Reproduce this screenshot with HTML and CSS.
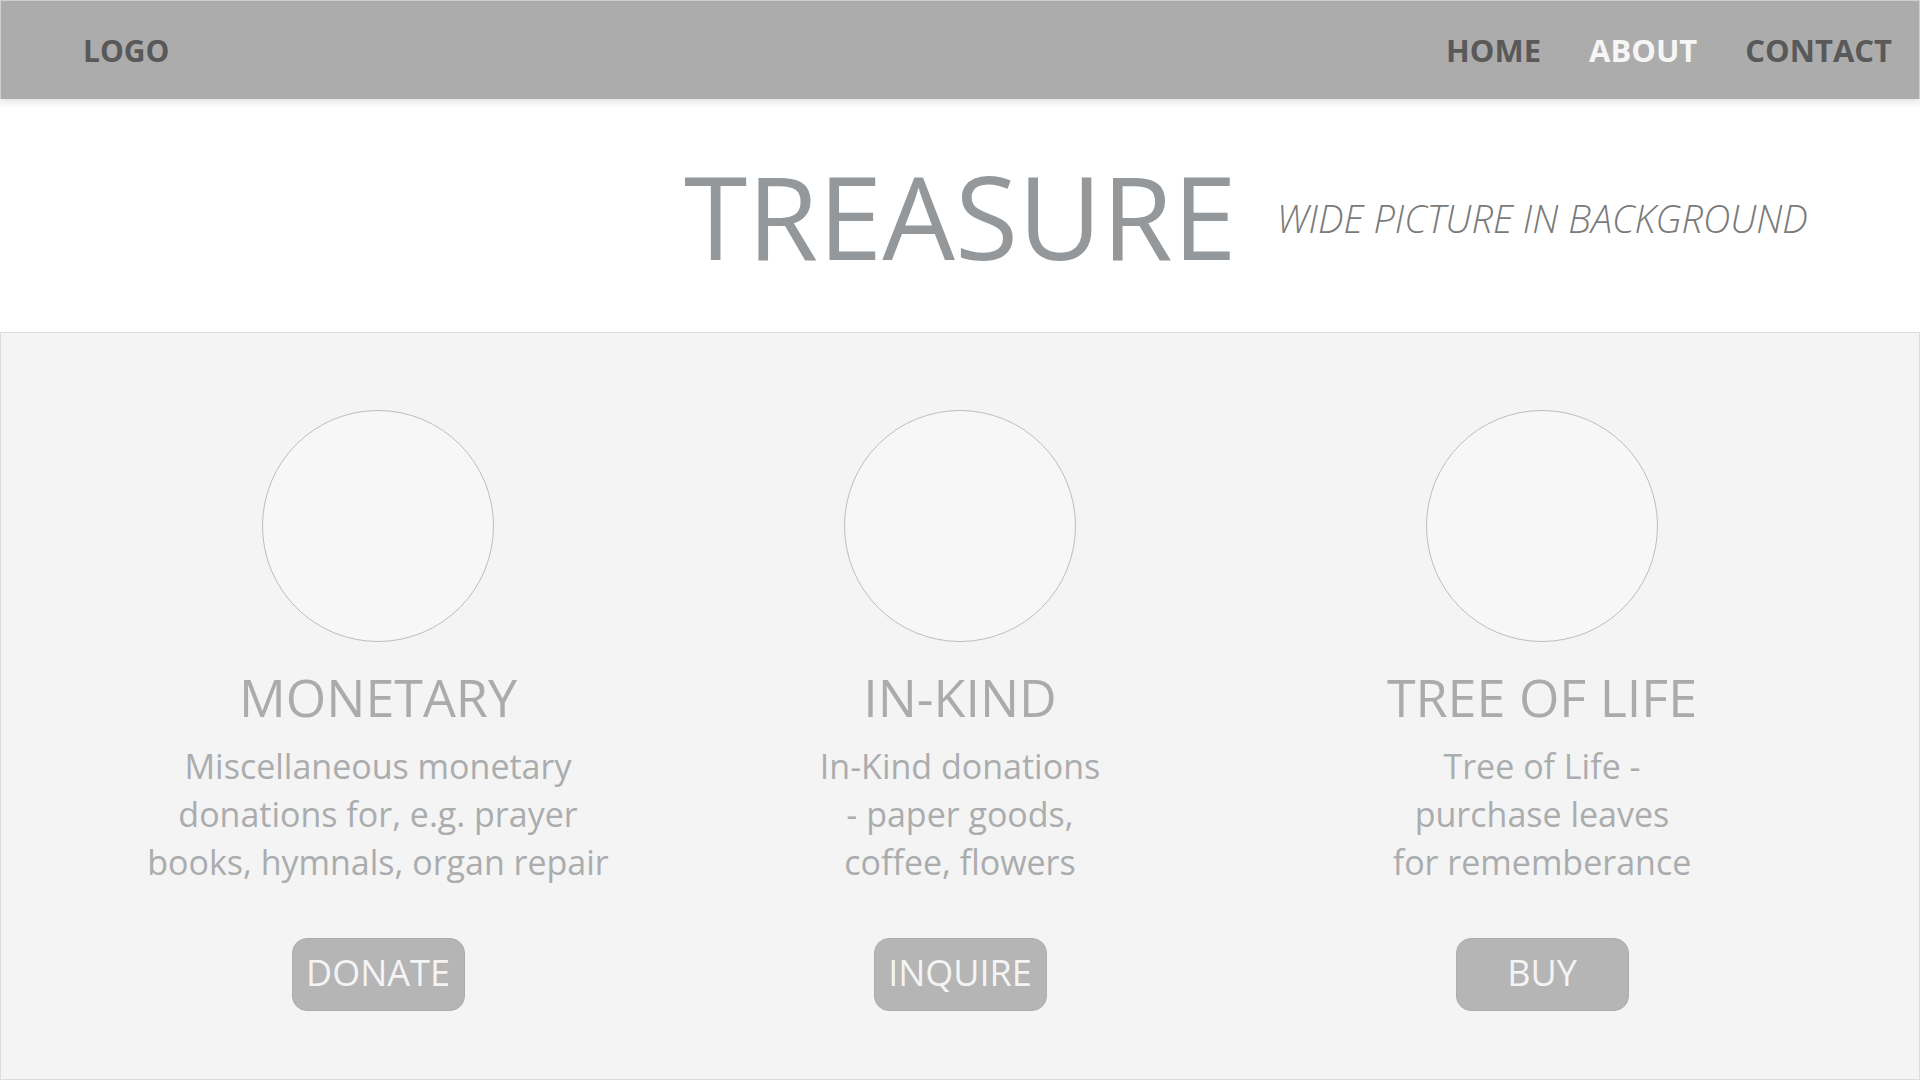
FILE: index.html
```html
<!DOCTYPE html>
<html>
<head>
<meta charset="utf-8">
<link rel="stylesheet" href="styles.css">
</head>
<body>
<header class="topbar">
  <div class="logo">LOGO</div>
  <nav class="nav">
    <a class="nav-link">HOME</a>
    <a class="nav-link active">ABOUT</a>
    <a class="nav-link">CONTACT</a>
  </nav>
</header>
<section class="hero">
  <h1 class="hero-title">TREASURE</h1>
  <div class="hero-sub">WIDE PICTURE IN BACKGROUND</div>
</section>
<section class="options">
  <div class="option">
    <div class="circle"></div>
    <h2 class="option-title">MONETARY</h2>
    <p class="option-text">Miscellaneous monetary<br>donations for, e.g. prayer<br>books, hymnals, organ repair</p>
    <a class="btn">DONATE</a>
  </div>
  <div class="option">
    <div class="circle"></div>
    <h2 class="option-title">IN-KIND</h2>
    <p class="option-text">In-Kind donations<br>- paper goods,<br>coffee, flowers</p>
    <a class="btn">INQUIRE</a>
  </div>
  <div class="option">
    <div class="circle"></div>
    <h2 class="option-title">TREE OF LIFE</h2>
    <p class="option-text">Tree of Life -<br>purchase leaves<br>for rememberance</p>
    <a class="btn">BUY</a>
  </div>
</section>
</body>
</html>
```
FILE: styles.css
```css
* { box-sizing: border-box; }
html, body { margin: 0; padding: 0; }
body {
  width: 1920px;
  height: 1080px;
  overflow: hidden;
  background: #ffffff;
  font-family: "Open Sans", "Noto Sans", sans-serif;
}
.topbar {
  height: 99px;
  background: #acacac;
  border: 1px solid #cfcfcf;
  border-bottom: none;
  display: flex;
  align-items: center;
  justify-content: space-between;
  padding: 0 27px 0 82px;
  box-shadow: 0 3px 8px rgba(0,0,0,0.12);
  position: relative;
  z-index: 1;
}
.logo {
  font-size: 30px;
  font-weight: 700;
  color: #595959;
}
.nav { display: flex; gap: 48px; }
.nav-link {
  font-size: 31px;
  font-weight: 700;
  color: #595959;
}
.nav-link.active { color: #f6f6f6; }
.hero {
  height: 233px;
  display: flex;
  align-items: center;
  padding-left: 684px;
  gap: 40px;
}
.hero-title {
  margin: 0;
  font-size: 115px;
  font-weight: 400;
  color: #95989a;
  line-height: 1;
}
.hero-sub {
  font-size: 38px;
  font-weight: 300;
  font-style: italic;
  color: #7a7a7a;
  margin-top: 4px;
}
.options {
  height: 748px;
  background: #f4f4f4;
  border: 1px solid #dcdcdc;
  display: grid;
  grid-template-columns: repeat(3, 582px);
  justify-content: center;
  padding-top: 77px;
}
.option {
  display: flex;
  flex-direction: column;
  align-items: center;
}
.circle {
  width: 232px;
  height: 232px;
  border-radius: 50%;
  border: 1px solid #bdbdbd;
  background: #f7f7f7;
}
.option-title {
  margin: 24px 0 0;
  font-size: 52px;
  font-weight: 400;
  color: #a9abad;
  line-height: 1.2;
}
.option-text {
  margin: 14px 0 0;
  font-size: 34px;
  line-height: 48px;
  color: #aaacae;
  text-align: center;
}
.btn {
  margin-top: 52px;
  width: 173px;
  height: 73px;
  border-radius: 15px;
  background: #b5b5b5;
  border: 1px solid #adadad;
  color: #f4f4f4;
  font-size: 36px;
  padding-bottom: 4px;
  display: flex;
  align-items: center;
  justify-content: center;
}
```
